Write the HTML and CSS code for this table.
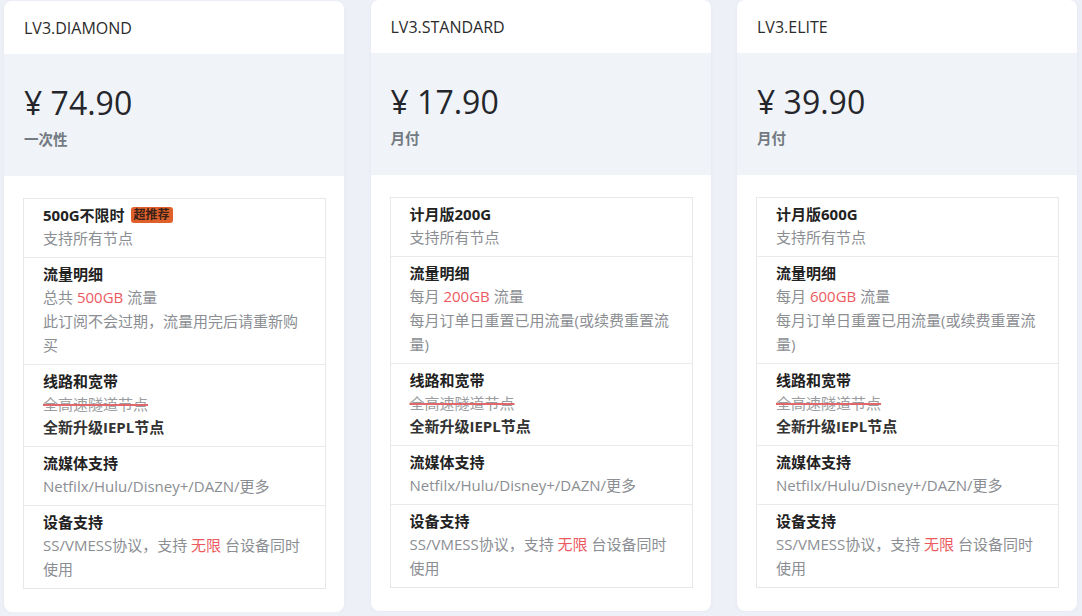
FILE: index.html
```html
<!DOCTYPE html>
<html lang="zh-CN">
<head>
<meta charset="utf-8">
<title>Plans</title>
<link rel="stylesheet" href="styles.css">
</head>
<body>
<div class="plans">
  <div class="card card-first">
    <div class="card-head">LV3.DIAMOND</div>
    <div class="price-box">
      <div class="price">¥ 74.90</div>
      <div class="period">一次性</div>
    </div>
    <div class="card-body">
      <ul class="features">
        <li class="item">
          <div class="item-title">500G不限时<span class="badge">超推荐</span></div>
          <div class="desc">支持所有节点</div>
        </li>
        <li class="item">
          <div class="item-title">流量明细</div>
          <div class="desc">总共 <span class="hl">500GB</span> 流量</div>
          <div class="desc">此订阅不会过期，流量用完后请重新购买</div>
        </li>
        <li class="item">
          <div class="item-title">线路和宽带</div>
          <div class="desc"><span class="strike">全高速隧道节点</span></div>
          <div class="strong">全新升级IEPL节点</div>
        </li>
        <li class="item">
          <div class="item-title">流媒体支持</div>
          <div class="desc">Netfilx/Hulu/Disney+/DAZN/更多</div>
        </li>
        <li class="item">
          <div class="item-title">设备支持</div>
          <div class="desc">SS/VMESS协议，支持 <span class="hl">无限</span> 台设备同时使用</div>
        </li>
      </ul>
    </div>
  </div>

  <div class="card">
    <div class="card-head">LV3.STANDARD</div>
    <div class="price-box">
      <div class="price">¥ 17.90</div>
      <div class="period">月付</div>
    </div>
    <div class="card-body">
      <ul class="features">
        <li class="item">
          <div class="item-title">计月版200G</div>
          <div class="desc">支持所有节点</div>
        </li>
        <li class="item">
          <div class="item-title">流量明细</div>
          <div class="desc">每月 <span class="hl">200GB</span> 流量</div>
          <div class="desc">每月订单日重置已用流量(或续费重置流量)</div>
        </li>
        <li class="item">
          <div class="item-title">线路和宽带</div>
          <div class="desc"><span class="strike">全高速隧道节点</span></div>
          <div class="strong">全新升级IEPL节点</div>
        </li>
        <li class="item">
          <div class="item-title">流媒体支持</div>
          <div class="desc">Netfilx/Hulu/Disney+/DAZN/更多</div>
        </li>
        <li class="item">
          <div class="item-title">设备支持</div>
          <div class="desc">SS/VMESS协议，支持 <span class="hl">无限</span> 台设备同时使用</div>
        </li>
      </ul>
    </div>
  </div>

  <div class="card">
    <div class="card-head">LV3.ELITE</div>
    <div class="price-box">
      <div class="price">¥ 39.90</div>
      <div class="period">月付</div>
    </div>
    <div class="card-body">
      <ul class="features">
        <li class="item">
          <div class="item-title">计月版600G</div>
          <div class="desc">支持所有节点</div>
        </li>
        <li class="item">
          <div class="item-title">流量明细</div>
          <div class="desc">每月 <span class="hl">600GB</span> 流量</div>
          <div class="desc">每月订单日重置已用流量(或续费重置流量)</div>
        </li>
        <li class="item">
          <div class="item-title">线路和宽带</div>
          <div class="desc"><span class="strike">全高速隧道节点</span></div>
          <div class="strong">全新升级IEPL节点</div>
        </li>
        <li class="item">
          <div class="item-title">流媒体支持</div>
          <div class="desc">Netfilx/Hulu/Disney+/DAZN/更多</div>
        </li>
        <li class="item">
          <div class="item-title">设备支持</div>
          <div class="desc">SS/VMESS协议，支持 <span class="hl">无限</span> 台设备同时使用</div>
        </li>
      </ul>
    </div>
  </div>
</div>
</body>
</html>
```

FILE: styles.css
```css
* { box-sizing: border-box; }

html, body {
  margin: 0;
  padding: 0;
  background: #edf0f6;
  font-family: "Open Sans", "Noto Sans CJK SC", sans-serif;
  color: #212529;
  overflow: hidden;
}

.plans {
  display: grid;
  grid-template-columns: repeat(3, 340px);
  column-gap: 26.5px;
  padding-left: 4px;
  align-items: start;
}

.card {
  background: #fff;
  border-radius: 8px;
  box-shadow: 0 1px 4px rgba(30, 40, 80, 0.04);
  overflow: hidden;
}

.card-first { margin-top: 1px; }

.card-head {
  height: 53px;
  padding: 0 20px;
  display: flex;
  align-items: center;
  font-size: 16px;
  color: #2b2b2b;
}

.price-box {
  background: #f0f3f8;
  height: 122px;
  padding: 29px 20px 0;
}

.price {
  font-size: 32px;
  line-height: 40px;
  font-weight: 500;
  color: #24262b;
}

.period {
  margin-top: 6px;
  font-size: 14.5px;
  line-height: 22px;
  font-weight: 700;
  color: #737a82;
}

.card-body {
  padding: 22px 18px 23px 19px;
}

.features {
  list-style: none;
  margin: 0;
  padding: 0;
  border: 1px solid #e6e8ec;
}

.item {
  padding: 5px 19px 7px;
  border-top: 1px solid #e9ebef;
}

.item:first-child { border-top: none; }

.item-title {
  font-size: 15px;
  line-height: 22px;
  font-weight: 700;
  color: #222;
  display: flex;
  align-items: center;
}

.desc {
  font-size: 15px;
  line-height: 24px;
  color: #8b8e93;
}

.strong {
  font-size: 15px;
  line-height: 23px;
  font-weight: 700;
  color: #333;
}

.hl { color: #ec5a5f; }

.strike {
  text-decoration: line-through;
  text-decoration-color: #e0686c;
  text-decoration-thickness: 2px;
  color: #9a9ca0;
}

.badge {
  display: inline-block;
  margin-left: 6px;
  padding: 0 3px;
  height: 16px;
  line-height: 16px;
  font-size: 12px;
  font-weight: 700;
  color: #3a2218;
  background: #e0602b;
  border-radius: 3px;
}
```
